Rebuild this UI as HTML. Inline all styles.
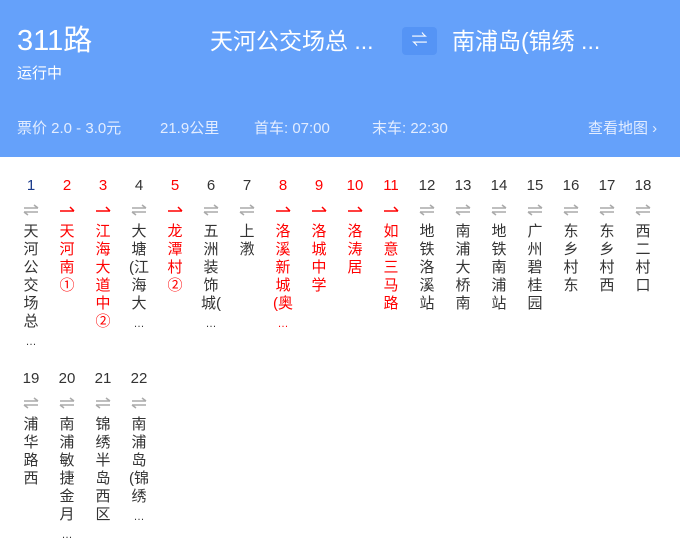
<!DOCTYPE html>
<html><head><meta charset="utf-8"><style>
*{margin:0;padding:0;box-sizing:border-box}
body{width:680px;height:545px;background:#fff;font-family:"Liberation Sans","Noto Sans CJK SC",sans-serif;overflow:hidden;position:relative}
.hd{position:absolute;left:0;top:0;width:680px;height:157px;background:#65a1fa;color:#fff}
.t{position:absolute;left:17px;top:24px;font-size:29px;line-height:34px}
.s{position:absolute;left:17px;top:65px;font-size:15px;line-height:18px}
.r{position:absolute;top:26px;font-size:23px;line-height:30px}
.sw{position:absolute;left:402px;top:27px;width:35px;height:28px;background:#5594f5;border-radius:4px;color:#fff;font-size:16px;text-align:center;line-height:28px}
.info{position:absolute;top:120px;font-size:15px;line-height:18px;color:#e3edff}
.st{position:absolute;width:36px;text-align:center;font-size:15px}
.n{height:20px;line-height:20px}
.a{height:27px;display:flex;justify-content:center;align-items:center}
.x div{height:18px;line-height:18px;white-space:nowrap}
.x .e{font-size:11px;line-height:22px;height:22px}
.red{color:#f00}
.blk{color:#333}
</style></head><body>
<div class="hd">
<div class="t">311路</div>
<div class="s">运行中</div>
<div class="r" style="left:210px">天河公交场总 ...</div>
<div class="sw">⇌</div>
<div class="r" style="left:452px">南浦岛(锦绣 ...</div>
<div class="info" style="left:17px">票价 2.0 - 3.0元</div>
<div class="info" style="left:160px">21.9公里</div>
<div class="info" style="left:254px">首车: 07:00</div>
<div class="info" style="left:372px">末车: 22:30</div>
<div class="info" style="left:588px">查看地图 ›</div>
</div>
<div id="L"></div>
<script>
var d=[["天|河|公|交|场|总|…",0],["天|河|南|①",1],["江|海|大|道|中|②",1],["大|塘|(江|海|大|…",0],["龙|潭|村|②",1],["五|洲|装|饰|城(|…",0],["上|漖",0],["洛|溪|新|城|(奥|…",1],["洛|城|中|学",1],["洛|涛|居",1],["如|意|三|马|路",1],["地|铁|洛|溪|站",0],["南|浦|大|桥|南",0],["地|铁|南|浦|站",0],["广|州|碧|桂|园",0],["东|乡|村|东",0],["东|乡|村|西",0],["西|二|村|口",0],["浦|华|路|西",0],["南|浦|敏|捷|金|月|…",0],["锦|绣|半|岛|西|区",0],["南|浦|岛|(锦|绣|…",0]];
var gray='<svg width="16" height="12"><path d="M1 4H15M11 1L15 4M1 8H15M5 11L1 8" stroke="#aaa" stroke-width="1.5" fill="none"/></svg>';
var red='<svg width="16" height="12"><path d="M1 7H15M11 3L15 7" stroke="#f00" stroke-width="1.5" fill="none"/></svg>';
var h='';
d.forEach(function(s,i){var c=i%18,r=Math.floor(i/18);var x=13+c*36,y=176+r*193;
var t=s[0].split('|').map(function(ch){return ch=='…'?'<div class="e">…</div>':'<div>'+ch+'</div>'}).join('');
h+='<div class="st '+(s[1]?'red':'blk')+'" style="left:'+x+'px;top:'+y+'px"><div class="n"'+(i==0?' style="color:#1a3a8a"':'')+'>'+(i+1)+'</div><div class="a">'+(s[1]?red:gray)+'</div><div class="x">'+t+'</div></div>';});
document.getElementById('L').innerHTML=h;
</script>
</body></html>
